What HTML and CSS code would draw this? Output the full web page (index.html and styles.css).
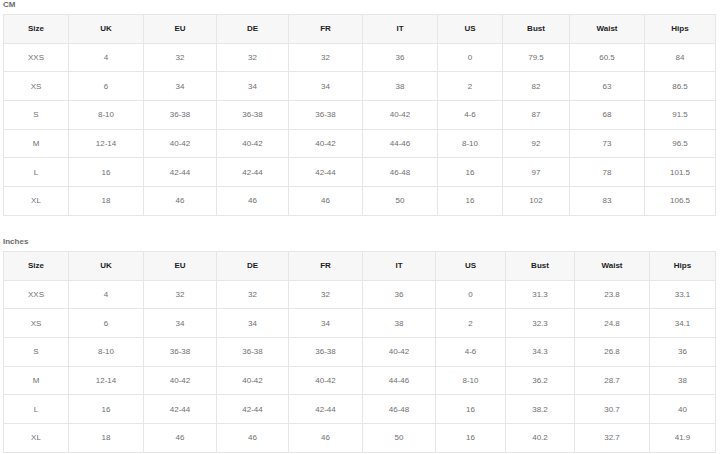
FILE: index.html
```html
<!DOCTYPE html>
<html>
<head>
<meta charset="utf-8">
<link rel="stylesheet" href="styles.css">
</head>
<body>
<div class="page">
  <section class="chart">
    <div class="label">CM</div>
    <table class="sizes">
      <colgroup>
        <col class="c1"><col class="c2"><col class="c3"><col class="c4"><col class="c5"><col class="c6"><col class="c7"><col class="c8"><col class="c9"><col class="c10">
      </colgroup>
      <thead>
        <tr><th>Size</th><th>UK</th><th>EU</th><th>DE</th><th>FR</th><th>IT</th><th>US</th><th>Bust</th><th>Waist</th><th>Hips</th></tr>
      </thead>
      <tbody>
        <tr><td>XXS</td><td>4</td><td>32</td><td>32</td><td>32</td><td>36</td><td>0</td><td>79.5</td><td>60.5</td><td>84</td></tr>
        <tr><td>XS</td><td>6</td><td>34</td><td>34</td><td>34</td><td>38</td><td>2</td><td>82</td><td>63</td><td>86.5</td></tr>
        <tr><td>S</td><td>8-10</td><td>36-38</td><td>36-38</td><td>36-38</td><td>40-42</td><td>4-6</td><td>87</td><td>68</td><td>91.5</td></tr>
        <tr><td>M</td><td>12-14</td><td>40-42</td><td>40-42</td><td>40-42</td><td>44-46</td><td>8-10</td><td>92</td><td>73</td><td>96.5</td></tr>
        <tr><td>L</td><td>16</td><td>42-44</td><td>42-44</td><td>42-44</td><td>46-48</td><td>16</td><td>97</td><td>78</td><td>101.5</td></tr>
        <tr><td>XL</td><td>18</td><td>46</td><td>46</td><td>46</td><td>50</td><td>16</td><td>102</td><td>83</td><td>106.5</td></tr>
      </tbody>
    </table>
  </section>
  <section class="chart second">
    <div class="label">Inches</div>
    <table class="sizes inches">
      <colgroup>
        <col class="c1"><col class="c2"><col class="c3"><col class="c4"><col class="c5"><col class="c6"><col class="c7"><col class="c8"><col class="c9"><col class="c10">
      </colgroup>
      <thead>
        <tr><th>Size</th><th>UK</th><th>EU</th><th>DE</th><th>FR</th><th>IT</th><th>US</th><th>Bust</th><th>Waist</th><th>Hips</th></tr>
      </thead>
      <tbody>
        <tr><td>XXS</td><td>4</td><td>32</td><td>32</td><td>32</td><td>36</td><td>0</td><td>31.3</td><td>23.8</td><td>33.1</td></tr>
        <tr><td>XS</td><td>6</td><td>34</td><td>34</td><td>34</td><td>38</td><td>2</td><td>32.3</td><td>24.8</td><td>34.1</td></tr>
        <tr><td>S</td><td>8-10</td><td>36-38</td><td>36-38</td><td>36-38</td><td>40-42</td><td>4-6</td><td>34.3</td><td>26.8</td><td>36</td></tr>
        <tr><td>M</td><td>12-14</td><td>40-42</td><td>40-42</td><td>40-42</td><td>44-46</td><td>8-10</td><td>36.2</td><td>28.7</td><td>38</td></tr>
        <tr><td>L</td><td>16</td><td>42-44</td><td>42-44</td><td>42-44</td><td>46-48</td><td>16</td><td>38.2</td><td>30.7</td><td>40</td></tr>
        <tr><td>XL</td><td>18</td><td>46</td><td>46</td><td>46</td><td>50</td><td>16</td><td>40.2</td><td>32.7</td><td>41.9</td></tr>
      </tbody>
    </table>
  </section>
</div>
</body>
</html>
```
FILE: styles.css
```css
html, body {
  margin: 0;
  padding: 0;
  background: #ffffff;
}
.page {
  padding: 0 5px 0 3px;
  font-family: "Liberation Sans", Arial, sans-serif;
}
.chart {
  display: flex;
  flex-direction: column;
}
.label {
  height: 14px;
  line-height: 10px;
  font-size: 8px;
  font-weight: bold;
  color: #6b6b6b;
}
.second {
  margin-top: 20px;
}
.second .label {
  height: 15px;
  line-height: 12px;
}
.sizes {
  width: 712px;
  border-collapse: collapse;
  table-layout: fixed;
  font-size: 8px;
}
.sizes th,
.sizes td {
  border: 1px solid #e6e6e6;
  text-align: center;
  padding: 0;
  height: 27.7px;
}
.sizes th {
  background: #f7f7f7;
  color: #1e1e1e;
  font-weight: bold;
}
.sizes td {
  color: #707070;
}
.c1 { width: 65px; }
.c2 { width: 75px; }
.c3 { width: 73px; }
.c4 { width: 72px; }
.c5 { width: 74px; }
.c6 { width: 75px; }
.c7 { width: 65px; }
.c8 { width: 67px; }
.c9 { width: 75px; }
.c10 { width: 71px; }
.inches .c6 { width: 73px; }
.inches .c7 { width: 70px; }
.inches .c8 { width: 69px; }
.inches .c9 { width: 75px; }
.inches .c10 { width: 66px; }
```
